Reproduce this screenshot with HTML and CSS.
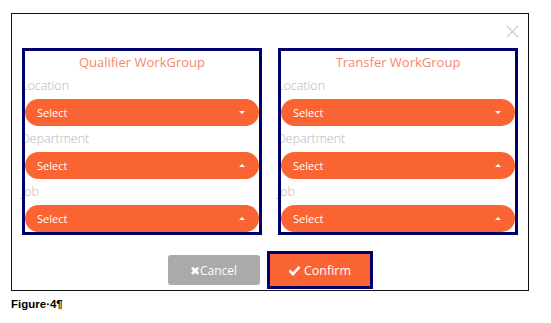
FILE: index.html
```html
<!DOCTYPE html>
<html>
  <head>
    <meta charset="UTF-8" />
    <title>WorkGroup Transfer</title>
    <link rel="stylesheet" href="styles.css">
  </head>

  <body>
    <div class="modal">
      <div class="modal-header">
        <span class="close">
          <svg width="13" height="13" viewBox="0 0 13 13"><path d="M1 1L12 12M12 1L1 12" stroke="#c8c8c8" stroke-width="1.2" fill="none" /></svg>
        </span>
      </div>

      <div class="groups">
        <div class="group">
          <div class="group-title">Qualifier WorkGroup</div>
          <label>Location</label>
          <div class="select">Select <span class="caret down"></span></div>
          <label>Department</label>
          <div class="select">Select <span class="caret up"></span></div>
          <label>Job</label>
          <div class="select">Select <span class="caret up"></span></div>
        </div>

        <div class="group">
          <div class="group-title">Transfer WorkGroup</div>
          <label>Location</label>
          <div class="select">Select <span class="caret down"></span></div>
          <label>Department</label>
          <div class="select">Select <span class="caret up"></span></div>
          <label>Job</label>
          <div class="select">Select <span class="caret up"></span></div>
        </div>
      </div>

      <div class="actions">
        <button class="btn cancel">&#10006;Cancel</button>
        <div class="highlight">
          <button class="btn confirm">
            <svg width="13" height="11" viewBox="0 0 13 11"><path d="M1.5 5.5L5 9L11.5 1.8" stroke="#fff" stroke-width="2.6" fill="none" /></svg>
            Confirm
          </button>
        </div>
      </div>
    </div>

    <p class="caption">Figure·4¶</p>
  </body>
</html>
```

FILE: styles.css
```css
body {
  font-family: "Open Sans", sans-serif;
  margin: 0;
  padding: 13px 0 0 11px;
  background: #fff;
}

.modal {
  width: 518px;
  height: 278px;
  border: 1px solid #111;
  padding: 0 10px;
  box-sizing: border-box;
}

.modal-header {
  height: 34px;
  display: flex;
  justify-content: flex-end;
  align-items: center;
}

.close {
  display: flex;
  margin-right: -1px;
  margin-top: 1px;
}

.groups {
  display: flex;
  gap: 16px;
}

.group {
  width: 240px;
  outline: 3px solid #00006b;
  outline-offset: -3px;
  padding: 3px;
  box-sizing: border-box;
  display: flex;
  flex-direction: column;
}

.group-title {
  height: 22px;
  line-height: 22px;
  text-align: center;
  color: #f7866f;
  font-size: 13px;
}

.group label {
  height: 26px;
  line-height: 26px;
  color: #b5b5b5;
  font-size: 12.5px;
  font-weight: 300;
  margin-left: -4px;
}

.select {
  height: 27px;
  border-radius: 14px;
  background: #fa6432;
  color: #fff;
  font-size: 11px;
  padding: 0 14px 0 12px;
  display: flex;
  align-items: center;
  justify-content: space-between;
}

.caret {
  width: 0;
  height: 0;
  border-left: 3px solid transparent;
  border-right: 3px solid transparent;
}

.caret.down {
  border-top: 3px solid #fff;
}

.caret.up {
  border-bottom: 3px solid #fff;
}

.actions {
  margin-top: 16px;
  display: flex;
  justify-content: center;
  align-items: center;
  gap: 7px;
}

.btn {
  font-family: "Open Sans", sans-serif;
  border: none;
  color: #fff;
  font-size: 12px;
  display: flex;
  align-items: center;
  justify-content: center;
  gap: 3px;
  border-radius: 3px;
  padding: 0;
}

.cancel {
  width: 92px;
  height: 30px;
  background: #aaaaaa;
}

.highlight {
  border: 3px solid #00006b;
}

.confirm {
  width: 100px;
  height: 32px;
  background: #fa6432;
  border-radius: 0;
  font-size: 12.5px;
}

.caption {
  margin: 7px 0 0 0;
  font-family: "Liberation Sans", Arial, sans-serif;
  font-weight: bold;
  font-size: 11.5px;
}
```
